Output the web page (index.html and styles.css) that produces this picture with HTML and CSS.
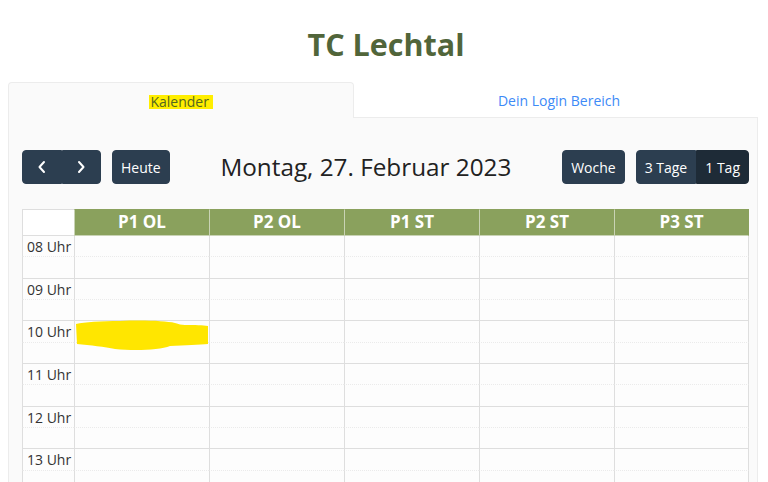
FILE: index.html
```html
<!DOCTYPE html>
<html lang="de">
<head>
<meta charset="utf-8">
<title>TC Lechtal</title>
<link rel="stylesheet" href="styles.css">
</head>
<body>
<div class="page">
  <h1 class="site-title">TC Lechtal</h1>
  <div class="tabs">
    <div class="tab active"><span class="mark">Kalender&nbsp;</span></div>
    <div class="tab"><a class="tab-link" href="#">Dein Login Bereich</a></div>
  </div>
  <div class="panel">
    <div class="toolbar">
      <div class="chunk">
        <div class="btn-group">
          <button class="btn icon-btn" aria-label="zurück"><svg width="10" height="14" viewBox="0 0 10 14"><path d="M7 2 L2.5 7 L7 12" fill="none" stroke="#fff" stroke-width="2" stroke-linecap="round" stroke-linejoin="round"/></svg></button>
          <button class="btn icon-btn" aria-label="weiter"><svg width="10" height="14" viewBox="0 0 10 14"><path d="M3 2 L7.5 7 L3 12" fill="none" stroke="#fff" stroke-width="2" stroke-linecap="round" stroke-linejoin="round"/></svg></button>
        </div>
        <button class="btn single">Heute</button>
      </div>
      <h2 class="cal-title">Montag, 27. Februar 2023</h2>
      <div class="chunk">
        <button class="btn single">Woche</button>
        <div class="btn-group">
          <button class="btn">3 Tage</button>
          <button class="btn is-active">1 Tag</button>
        </div>
      </div>
    </div>
    <div class="grid">
      <div class="row head">
        <div class="cell corner"></div>
        <div class="cell res">P1 OL</div>
        <div class="cell res">P2 OL</div>
        <div class="cell res">P1 ST</div>
        <div class="cell res">P2 ST</div>
        <div class="cell res">P3 ST</div>
      </div>
      <div class="row slot half"><div class="cell label">08 Uhr</div><div class="cell"></div><div class="cell"></div><div class="cell"></div><div class="cell"></div><div class="cell"></div></div>
      <div class="row slot"><div class="cell label"></div><div class="cell"></div><div class="cell"></div><div class="cell"></div><div class="cell"></div><div class="cell"></div></div>
      <div class="row slot half"><div class="cell label">09 Uhr</div><div class="cell"></div><div class="cell"></div><div class="cell"></div><div class="cell"></div><div class="cell"></div></div>
      <div class="row slot"><div class="cell label"></div><div class="cell"></div><div class="cell"></div><div class="cell"></div><div class="cell"></div><div class="cell"></div></div>
      <div class="row slot half"><div class="cell label">10 Uhr</div><div class="cell"></div><div class="cell"></div><div class="cell"></div><div class="cell"></div><div class="cell"></div></div>
      <div class="row slot"><div class="cell label"></div><div class="cell"></div><div class="cell"></div><div class="cell"></div><div class="cell"></div><div class="cell"></div></div>
      <div class="row slot half"><div class="cell label">11 Uhr</div><div class="cell"></div><div class="cell"></div><div class="cell"></div><div class="cell"></div><div class="cell"></div></div>
      <div class="row slot"><div class="cell label"></div><div class="cell"></div><div class="cell"></div><div class="cell"></div><div class="cell"></div><div class="cell"></div></div>
      <div class="row slot half"><div class="cell label">12 Uhr</div><div class="cell"></div><div class="cell"></div><div class="cell"></div><div class="cell"></div><div class="cell"></div></div>
      <div class="row slot"><div class="cell label"></div><div class="cell"></div><div class="cell"></div><div class="cell"></div><div class="cell"></div><div class="cell"></div></div>
      <div class="row slot half"><div class="cell label">13 Uhr</div><div class="cell"></div><div class="cell"></div><div class="cell"></div><div class="cell"></div><div class="cell"></div></div>
      <div class="row slot"><div class="cell label"></div><div class="cell"></div><div class="cell"></div><div class="cell"></div><div class="cell"></div><div class="cell"></div></div>
      <svg class="blob" width="134" height="32" viewBox="0 0 134 32"><path d="M1 4 C10 2 25 1 45 1 C70 0 90 1 100 3 C104 4 106 5 110 5 C120 5 128 5 133 6 L133 24 C125 25 110 25 95 26 C85 30 60 31 40 29 C30 27 15 25 2 24 Z" fill="#ffe600"/></svg>
    </div>
  </div>
</div>
</body>
</html>
```

FILE: styles.css
```css
html, body {
  margin: 0;
  padding: 0;
  overflow: hidden;
  background: #fff;
}
body {
  font-family: "Open Sans", "Liberation Sans", sans-serif;
  color: #333;
  font-size: 14px;
}
.page {
  width: 750px;
  margin-left: 8px;
}
.site-title {
  margin: 0;
  padding-top: 22px;
  height: 82px;
  box-sizing: border-box;
  text-align: center;
  font-size: 30.5px;
  line-height: 44px;
  font-weight: 700;
  color: #51653a;
  padding-left: 6px;
}
.tabs {
  display: flex;
  height: 36px;
}
.tab {
  flex: 0 0 346px;
  box-sizing: border-box;
  display: flex;
  align-items: center;
  justify-content: center;
  font-size: 14px;
  padding-top: 2px;
  border-bottom: 1px solid #ececec;
}
.tab + .tab {
  flex: 1 1 auto;
  padding-left: 6px;
}
.tab.active {
  background: #fafafa;
  border: 1px solid #ececec;
  border-bottom: none;
  border-radius: 4px 4px 0 0;
}
.mark {
  background: #ffee00;
  color: #55661f;
  line-height: 14px;
  padding-left: 1px;
}
.tab-link {
  color: #3d8af7;
  text-decoration: none;
}
.panel {
  background: #fafafa;
  border: 1px solid #ececec;
  border-top: none;
  padding: 32px 8px 0 13px;
  height: 400px;
}
.toolbar {
  display: flex;
  justify-content: space-between;
  align-items: center;
  width: 727px;
  margin-bottom: 25px;
}
.chunk {
  display: flex;
  align-items: center;
  gap: 11px;
}
.btn-group {
  display: flex;
}
.btn {
  font-family: "Open Sans", "Liberation Sans", sans-serif;
  font-size: 14px;
  line-height: 21px;
  height: 34px;
  box-sizing: border-box;
  background: #2c3e50;
  border: 1px solid #2c3e50;
  color: #fff;
  padding: 5px 8px;
  border-radius: 0;
  margin: 0;
  cursor: pointer;
}
.btn.single {
  border-radius: 4px;
}
.btn-group .btn:first-child {
  border-radius: 4px 0 0 4px;
}
.btn-group .btn:last-child {
  border-radius: 0 4px 4px 0;
}
.btn.is-active {
  background: #1e2b37;
  border-color: #1e2b37;
}
.icon-btn {
  width: 39.5px;
  display: flex;
  align-items: center;
  justify-content: center;
  padding: 0;
}
.cal-title {
  margin: 0;
  font-size: 24.3px;
  font-weight: 400;
  color: #222;
  line-height: 34px;
}
.grid {
  position: relative;
  width: 727px;
}
.row {
  display: grid;
  grid-template-columns: 52px repeat(5, 135px);
}
.cell {
  box-sizing: border-box;
  border-left: 1px solid #dedede;
}
.cell:last-child {
  border-right: 1px solid #dedede;
}
.head {
  height: 27px;
}
.head .cell {
  border-top: 1px solid #dedede;
  border-bottom: 1px solid #dedede;
}
.corner {
  background: #fff;
}
.res {
  background: #8aa15d;
  color: #fff;
  font-weight: 700;
  font-size: 17px;
  line-height: 24px;
  text-align: center;
  border-color: #c9d3b5 !important;
  border-top-color: #8aa15d !important;
}
.head .res:last-child {
  border-right-color: #8aa15d !important;
}
.slot {
  height: 21.33px;
  grid-template-rows: 21.33px;
}
.slot .cell {
  height: 21.33px;
  background: #fdfdfd;
  border-bottom: 1px solid #dedede;
}
.slot.half .cell {
  border-bottom: 1px dotted #ebebeb;
}
.label {
  font-size: 14px;
  line-height: 22px;
  padding-left: 4px;
  color: #333;
  white-space: nowrap;
  overflow: visible;
}
.blob {
  position: absolute;
  left: 53px;
  top: 111px;
}
```
